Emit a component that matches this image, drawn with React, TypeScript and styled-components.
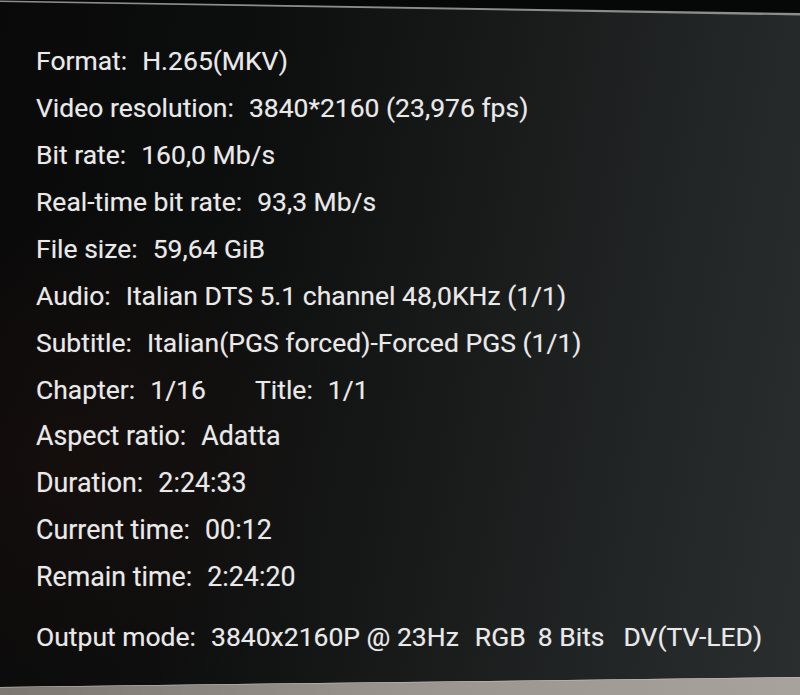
import React from "react";
import styled, { createGlobalStyle } from "styled-components";

const Global = createGlobalStyle`
  html, body { margin: 0; padding: 0; background: #0a0a0a; }
  #root { width: 800px; height: 695px; }
`;

const Screen = styled.div`
  position: relative;
  width: 800px;
  height: 695px;
  overflow: hidden;
  box-sizing: border-box;
  padding: 37px 0 0 36px;
  background:
    radial-gradient(ellipse 420px 360px at 70px 460px, rgba(70, 30, 20, 0.16), rgba(0, 0, 0, 0) 70%),
    linear-gradient(100deg, #090909 0%, #0d0e0e 30%, #181a1a 55%, #232626 80%, #2a2e2e 100%);
  font-family: Roboto, "Noto Sans", "Liberation Sans", sans-serif;
  color: #e9e9e9;
`;

const TopBezel = styled.div`
  position: absolute;
  left: 0;
  top: 0;
  width: 800px;
  height: 18px;
  background: #8c8c8c;
  clip-path: polygon(0 0, 800px 0, 800px 15.5px, 0 2px);
  &::after {
    content: "";
    position: absolute;
    inset: 0;
    background: #060707;
    clip-path: polygon(0 0, 800px 0, 800px 13px, 0 0.5px);
  }
`;

const Wall = styled.div`
  position: absolute;
  left: 0;
  bottom: 0;
  width: 800px;
  height: 20px;
  background: linear-gradient(90deg, #7d7772 0%, #9a948e 50%, #a8a29c 100%);
  clip-path: polygon(0 12px, 800px 2px, 800px 20px, 0 20px);
  &::before {
    content: "";
    position: absolute;
    inset: 0;
    background: #c9c4bf;
    clip-path: polygon(0 11px, 800px 1px, 800px 2.5px, 0 12.5px);
  }
`;

const List = styled.div`
  display: flex;
  flex-direction: column;
`;

const Row = styled.div<{ $gapTop?: number; $size?: number }>`
  display: flex;
  align-items: baseline;
  height: 47px;
  line-height: 47px;
  font-size: ${(p) => p.$size ?? 26.5}px;
  white-space: pre;
  margin-top: ${(p) => p.$gapTop ?? 0}px;
  text-shadow: 0 0 1px rgba(255, 255, 255, 0.35);
`;

const Label = styled.span`
  margin-right: 15px;
`;

const Value = styled.span``;

const Pair = styled.span<{ $width?: number }>`
  display: inline-flex;
  width: ${(p) => (p.$width ? `${p.$width}px` : "auto")};
`;

const Chunk = styled.span<{ $space?: number }>`
  margin-left: ${(p) => p.$space ?? 0}px;
`;

const rows: [string, string][] = [
  ["Format:", "H.265(MKV)"],
  ["Video resolution:", "3840*2160 (23,976 fps)"],
  ["Bit rate:", "160,0 Mb/s"],
  ["Real-time bit rate:", "93,3 Mb/s"],
  ["File size:", "59,64 GiB"],
  ["Audio:", "Italian DTS 5.1 channel 48,0KHz (1/1)"],
  ["Subtitle:", "Italian(PGS forced)-Forced PGS (1/1)"],
];

const rows2: [string, string][] = [
  ["Aspect ratio:", "Adatta"],
  ["Duration:", "2:24:33"],
  ["Current time:", "00:12"],
  ["Remain time:", "2:24:20"],
];

export default function App() {
  return (
    <>
      <Global />
      <Screen>
        <TopBezel />
        <List>
          {rows.map(([l, v]) => (
            <Row key={l}>
              <Label>{l}</Label>
              <Value>{v}</Value>
            </Row>
          ))}
          <Row>
            <Pair $width={219}>
              <Label>Chapter:</Label>
              <Value>1/16</Value>
            </Pair>
            <Pair>
              <Label>Title:</Label>
              <Value>1/1</Value>
            </Pair>
          </Row>
          {rows2.map(([l, v]) => (
            <Row key={l} $size={26.8}>
              <Label>{l}</Label>
              <Value>{v}</Value>
            </Row>
          ))}
          <Row $gapTop={12}>
            <Label>Output mode:</Label>
            <Value>3840x2160P @ 23Hz</Value>
            <Chunk $space={16}>RGB</Chunk>
            <Chunk $space={12}>8 Bits</Chunk>
            <Chunk $space={19}>DV(TV-LED)</Chunk>
          </Row>
        </List>
        <Wall />
      </Screen>
    </>
  );
}
